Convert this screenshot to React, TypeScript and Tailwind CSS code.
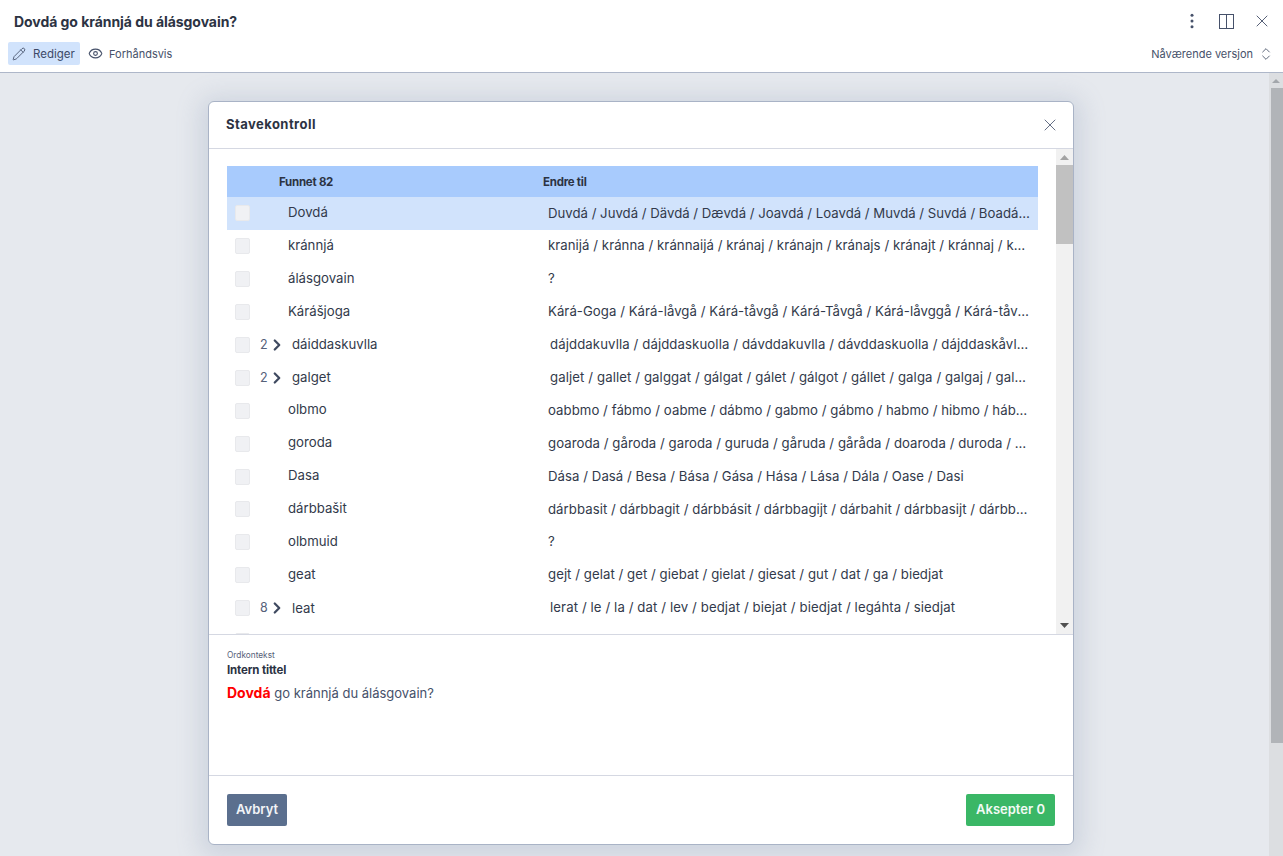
import { Pencil, Eye, X, ChevronsUpDown, ChevronRight } from "lucide-react";

const rows: [string, string, string][] = [
  ["", "Dovdá", "Duvdá / Juvdá / Dävdá / Dævdá / Joavdá / Loavdá / Muvdá / Suvdá / Boadá / Dovdát / Dovdán / Dovdás"],
  ["", "kránnjá", "kranijá / kránna / kránnaijá / kránaj / kránajn / kránajs / kránajt / kránnaj / kránnjat / kránnjas"],
  ["", "álásgovain", "?"],
  ["", "Kárášjoga", "Kárá-Goga / Kárá-låvgå / Kárá-tåvgå / Kárá-Tåvgå / Kárá-låvggå / Kárá-tåvggå / Kárá-Tåvggå"],
  ["2", "dáiddaskuvlla", "dájddakuvlla / dájddaskuolla / dávddakuvlla / dávddaskuolla / dájddaskåvllå / dávddaskåvllå"],
  ["2", "galget", "galjet / gallet / galggat / gálgat / gálet / gálgot / gállet / galga / galgaj / galgat / galgan / galgas"],
  ["", "olbmo", "oabbmo / fábmo / oabme / dábmo / gabmo / gábmo / habmo / hibmo / hábmo / jabmo / jábmo / lábmo"],
  ["", "goroda", "goaroda / gåroda / garoda / guruda / gåruda / gåråda / doaroda / duroda / goarrada / gurada"],
  ["", "Dasa", "Dása / Dasá / Besa / Bása / Gása / Hása / Lása / Dála / Oase / Dasi"],
  ["", "dárbbašit", "dárbbasit / dárbbagit / dárbbásit / dárbbagijt / dárbahit / dárbbasijt / dárbbahit / dárbbasin"],
  ["", "olbmuid", "?"],
  ["", "geat", "gejt / gelat / get / giebat / gielat / giesat / gut / dat / ga / biedjat"],
  ["8", "leat", "lerat / le / la / dat / lev / bedjat / biejat / biedjat / legáhta / siedjat"],
  ["", "dat", "dal / dan / das / dau / dát / duot / da / lerat / bedjat / biejat / biedjat / legáhta / siedjat"],
];

function Row({ count, word, sugg, active }: { count: string; word: string; sugg: string; active: boolean }) {
  const grouped = count !== "";
  const spacing = grouped ? "tracking-[0.1px]" : active ? "" : "tracking-[0.05px]";
  return (
    <div className={`flex h-[32.9px] shrink-0 items-center text-[13.2px] text-[#323a4b] ${active ? "bg-[#d1e3fc]" : ""}`}>
      <div className="ml-2 h-[16px] w-[15px] shrink-0 rounded-[2px] border border-[#e8e9ec] bg-[#f0f1f4]" />
      {grouped ? (
        <>
          <div className="ml-[10px] w-[7px] shrink-0 text-[12.5px] text-[#566179]">{count}</div>
          <ChevronRight className="ml-[1px] h-[18px] w-[18px] shrink-0 text-[#3f4a60]" strokeWidth={3} />
          <div className="ml-[6px] w-[258px] shrink-0 leading-none">{word}</div>
        </>
      ) : (
        <div className="ml-[38px] w-[260px] shrink-0 -translate-y-[1px] leading-none">{word}</div>
      )}
      <div className={`min-w-0 flex-1 truncate pr-2 -translate-y-[0.5px] ${spacing}`}>{sugg}</div>
    </div>
  );
}

export default function App() {
  return (
    <div className="flex h-[856px] w-[1283px] flex-col overflow-hidden bg-white font-['Inter',sans-serif] text-[#323a4b]">
      <header className="flex h-[73px] shrink-0 flex-col border-b border-[#aeb7c9] bg-white">
        <div className="flex h-[42px] items-center justify-between pl-[14px] pr-[11px]">
          <h1 className="text-[14px] font-bold tracking-[-0.05px] text-[#2c3343]">Dovdá go kránnjá du álásgovain?</h1>
          <div className="flex items-center">
            <svg width="6" height="16" viewBox="0 0 6 16" className="text-[#46516a]">
              <circle cx="3" cy="2.2" r="1.5" fill="currentColor" />
              <circle cx="3" cy="8" r="1.5" fill="currentColor" />
              <circle cx="3" cy="13.7" r="1.5" fill="currentColor" />
            </svg>
            <svg width="15" height="15" viewBox="0 0 15 15" className="ml-[24px] text-[#46516a]" fill="none" stroke="currentColor" strokeWidth="1">
              <rect x="0.5" y="0.5" width="14" height="14" />
              <path d="M7.5 0.5v14" />
            </svg>
            <X className="ml-[18px] h-[20px] w-[20px] text-[#46516a]" strokeWidth={1.1} />
          </div>
        </div>
        <div className="flex items-center justify-between pl-2 pr-[9px]">
          <div className="flex items-center text-[11px] text-[#46516a]">
            <div className="flex h-[23px] w-[72px] items-center rounded-[2px] bg-[#d1e3fc] pl-[4px]">
              <Pencil className="h-[14px] w-[14px]" strokeWidth={1.5} />
              <span className="ml-[7px] translate-y-[0.5px] text-[11.5px] text-[#3d4a68]">Rediger</span>
            </div>
            <Eye className="ml-[8px] h-[15px] w-[15px]" strokeWidth={1.75} />
            <span className="ml-[6px] translate-y-[0.5px]">Forhåndsvis</span>
          </div>
          <div className="flex items-center text-[11px] text-[#46516a]">
            <span className="translate-y-[0.5px]">Nåværende versjon</span>
            <ChevronsUpDown className="ml-[5px] h-[16px] w-[16px] text-[#3f4a60]" strokeWidth={1.25} />
          </div>
        </div>
      </header>

      <div className="flex min-h-0 flex-1">
        <main className="flex min-w-0 flex-1 justify-start bg-[#e6e9ee] pl-[208px] pt-[28px]">
          <section className="flex h-[744px] w-[866px] flex-col overflow-hidden rounded-[6px] border border-[#a9b3c6] bg-white shadow-[0_4px_24px_8px_rgba(120,135,170,0.22)]">
            <div className="flex h-[47px] shrink-0 items-center justify-between border-b border-[#d5d8e2] pb-[1px] pl-[17px] pr-[13px]">
              <h2 className="text-[13px] font-bold tracking-[0.45px] text-[#2c3343]">Stavekontroll</h2>
              <X className="h-[20px] w-[20px] text-[#566179]" strokeWidth={1.1} />
            </div>

            <div className="flex h-[486px] shrink-0 border-b border-[#d5d8e2]">
              <div className="flex min-w-0 flex-1 flex-col overflow-hidden pl-[18px] pr-[18px] pt-[17px]">
                <div className="flex h-[31px] shrink-0 items-center bg-[#a8cbfd] pt-[2px] text-[11.5px] font-bold tracking-[-0.25px] text-[#2c3343]">
                  <div className="ml-[52px] w-[264px]">Funnet 82</div>
                  <div>Endre til</div>
                </div>
                {rows.map((r, i) => (
                  <Row key={i} count={r[0]} word={r[1]} sugg={r[2]} active={i === 0} />
                ))}
              </div>
              <div className="flex w-[17px] shrink-0 flex-col items-center bg-[#f1f1f1]">
                <svg className="mt-[6px] shrink-0" width="9" height="5" viewBox="0 0 9 5"><path d="M4.5 0 9 5H0z" fill="#a3a3a3" /></svg>
                <div className="mt-[5px] h-[79px] w-full bg-[#c1c1c1]" />
                <div className="flex-1" />
                <svg className="mb-[6px] shrink-0" width="9" height="5" viewBox="0 0 9 5"><path d="M0 0h9L4.5 5z" fill="#505050" /></svg>
              </div>
            </div>

            <div className="flex h-[141px] shrink-0 flex-col border-b border-[#d5d8e2] pl-[18px] pr-[17px] pt-[15px]">
              <div className="text-[8.3px] leading-[11px] text-[#566179]">Ordkontekst</div>
              <div className="mt-[2px] text-[11.5px] font-bold leading-[15px] tracking-[-0.15px] text-[#2c3343]">Intern tittel</div>
              <p className="mt-[6px] text-[13px] leading-[18px] text-[#46516a]">
                <span className="text-[14px] font-bold text-[#ff0000]">Dovdá</span> go kránnjá du álásgovain?
              </p>
            </div>

            <div className="flex flex-1 items-center justify-between pb-[1px] pl-[18px] pr-[18px]">
              <button className="h-[32px] w-[60px] rounded-[2px] bg-[#5b6f8e] text-[13px] font-semibold text-[#f2f4f7]">Avbryt</button>
              <button className="h-[32px] w-[89px] rounded-[2px] bg-[#3ab766] text-[13px] font-semibold text-[#f2faf5]">Aksepter 0</button>
            </div>
          </section>
        </main>

        <div className="flex w-[14px] shrink-0 flex-col items-center bg-[#dcdee1]">
          <svg className="mt-[6px] shrink-0" width="8" height="4" viewBox="0 0 8 4"><path d="M4 0 8 4H0z" fill="#a3a7ac" /></svg>
          <div className="ml-[2px] mt-[5px] h-[655px] w-[12px] bg-[#b1b4b8]" />
        </div>
      </div>
    </div>
  );
}
